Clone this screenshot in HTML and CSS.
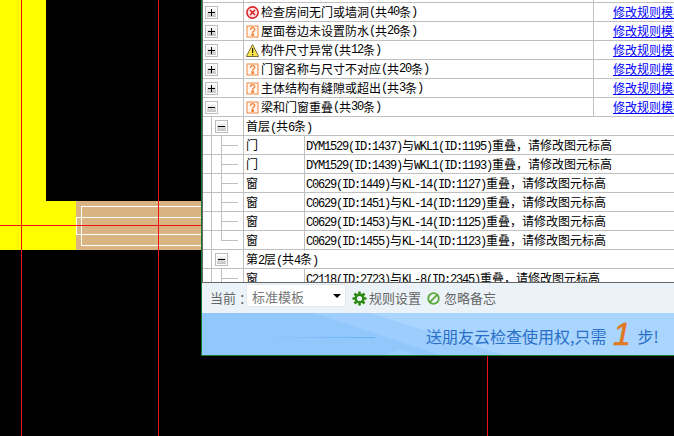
FILE: index.html
```html
<!DOCTYPE html>
<html lang="en">

<head>
  <meta charset="UTF-8">
  <meta name="viewport" content="width=device-width, initial-scale=1.0">
  <title>规则检查</title>
  <link rel="stylesheet" href="styles.css">
</head>

<body>

  <!-- Icon definitions -->
  <svg class="defs" width="0" height="0">
    <defs>
      <linearGradient id="box-fill" x1="0" y1="0" x2="0" y2="1">
        <stop offset="0" stop-color="#ffffff" />
        <stop offset="1" stop-color="#c4c4c4" />
      </linearGradient>
      <symbol id="i-plus" viewBox="0 0 13 13">
        <rect x="0.5" y="0.5" width="12" height="12" fill="#fff" stroke="#bdbdbd" />
        <rect x="2" y="2" width="9" height="9" fill="url(#box-fill)" />
        <path d="M3 6h7v1H3zM6 3h1v7H6z" fill="#000" />
      </symbol>
      <symbol id="i-minus" viewBox="0 0 13 13">
        <rect x="0.5" y="0.5" width="12" height="12" fill="#fff" stroke="#bdbdbd" />
        <rect x="2" y="2" width="9" height="9" fill="url(#box-fill)" />
        <path d="M3 6h7v1H3z" fill="#000" />
      </symbol>
      <symbol id="i-error" viewBox="0 0 13 13">
        <circle cx="6.500" cy="6.500" r="5.600" fill="#fde8e8" stroke="#d8262c" stroke-width="1.600" />
        <path d="M4 4l5 5M9 4l-5 5" stroke="#d8262c" stroke-width="1.700" />
      </symbol>
      <symbol id="i-question" viewBox="0 0 13 13">
        <rect x="1" y="1" width="11" height="11" fill="#fff7ef" stroke="#f0843c" />
        <path d="M4.500 5c0-3 4.300-3 4.300-.4C8.800 6.200 6.500 6 6.500 7.800M6 9h1.300v1.300H6z" fill="none" stroke="#f0843c" stroke-width="1.300" />
      </symbol>
      <symbol id="i-warn" viewBox="0 0 13 13">
        <path d="M6.500 .5L12.700 12.500H.3z" fill="#ffe34d" stroke="#77703a" />
        <path d="M6 4h1.200v5H6zM6 10h1.200v1.200H6z" fill="#222" />
      </symbol>
    </defs>
  </svg>

  <!-- Drawing canvas behind the panel -->
  <svg class="canvas" width="674" height="436" viewBox="0 0 674 436" shape-rendering="crispEdges">
    <rect x="0" y="0" width="46" height="250" fill="#ffff00" />
    <rect x="46" y="201" width="30" height="49" fill="#ffff00" />
    <rect x="76" y="201" width="126" height="49" fill="#d9b382" />
    <path d="M201 206.500H81.500V245.500H201M201 217.500H76.500V234.500H201" fill="none" stroke="#fff" />
    <path d="M21.500 0V436M158.500 0V436M487.500 0V436M0 225.500H201" fill="none" stroke="#ee1111" />
  </svg>

  <div class="panel">

    <!-- Rule list -->
    <div class="list">
      <div class="row row-parent row-cut">
        <div class="tree"></div>
        <div class="name"></div>
        <div class="link"></div>
      </div>

      <div class="row row-parent">
        <div class="tree"><svg class="box"><use href="#i-plus" /></svg></div>
        <div class="name"><svg class="icon"><use href="#i-error" /></svg>检查房间无门或墙洞<span class="m">(</span>共<span class="m">40</span>条<span class="m">)</span></div>
        <div class="link"><a href="#">修改规则模板</a></div>
      </div>
      <div class="row row-parent">
        <div class="tree"><svg class="box"><use href="#i-plus" /></svg></div>
        <div class="name"><svg class="icon"><use href="#i-question" /></svg>屋面卷边未设置防水<span class="m">(</span>共<span class="m">26</span>条<span class="m">)</span></div>
        <div class="link"><a href="#">修改规则模板</a></div>
      </div>
      <div class="row row-parent">
        <div class="tree"><svg class="box"><use href="#i-plus" /></svg></div>
        <div class="name"><svg class="icon"><use href="#i-warn" /></svg>构件尺寸异常<span class="m">(</span>共<span class="m">12</span>条<span class="m">)</span></div>
        <div class="link"><a href="#">修改规则模板</a></div>
      </div>
      <div class="row row-parent">
        <div class="tree"><svg class="box"><use href="#i-plus" /></svg></div>
        <div class="name"><svg class="icon"><use href="#i-question" /></svg>门窗名称与尺寸不对应<span class="m">(</span>共<span class="m">20</span>条<span class="m">)</span></div>
        <div class="link"><a href="#">修改规则模板</a></div>
      </div>
      <div class="row row-parent">
        <div class="tree"><svg class="box"><use href="#i-plus" /></svg></div>
        <div class="name"><svg class="icon"><use href="#i-question" /></svg>主体结构有缝隙或超出<span class="m">(</span>共<span class="m">3</span>条<span class="m">)</span></div>
        <div class="link"><a href="#">修改规则模板</a></div>
      </div>
      <div class="row row-parent">
        <div class="tree"><svg class="box"><use href="#i-minus" /></svg></div>
        <div class="name"><svg class="icon"><use href="#i-question" /></svg>梁和门窗重叠<span class="m">(</span>共<span class="m">30</span>条<span class="m">)</span></div>
        <div class="link"><a href="#">修改规则模板</a></div>
      </div>

      <!-- First floor -->
      <div class="row row-floor">
        <div class="tree tree-floor"><svg class="box"><use href="#i-minus" /></svg></div>
        <div class="floor">首层<span class="m">(</span>共<span class="m">6</span>条<span class="m">)</span></div>
      </div>
      <div class="row row-item">
        <div class="tree tree-item"></div>
        <div class="kind">门</div>
        <div class="desc"><span class="m">DYM1529(ID:1437)</span>与<span class="m">WKL1(ID:1195)</span>重叠，请修改图元标高</div>
      </div>
      <div class="row row-item">
        <div class="tree tree-item"></div>
        <div class="kind">门</div>
        <div class="desc"><span class="m">DYM1529(ID:1439)</span>与<span class="m">WKL1(ID:1193)</span>重叠，请修改图元标高</div>
      </div>
      <div class="row row-item">
        <div class="tree tree-item"></div>
        <div class="kind">窗</div>
        <div class="desc"><span class="m">C0629(ID:1449)</span>与<span class="m">KL-14(ID:1127)</span>重叠，请修改图元标高</div>
      </div>
      <div class="row row-item">
        <div class="tree tree-item"></div>
        <div class="kind">窗</div>
        <div class="desc"><span class="m">C0629(ID:1451)</span>与<span class="m">KL-14(ID:1129)</span>重叠，请修改图元标高</div>
      </div>
      <div class="row row-item">
        <div class="tree tree-item"></div>
        <div class="kind">窗</div>
        <div class="desc"><span class="m">C0629(ID:1453)</span>与<span class="m">KL-14(ID:1125)</span>重叠，请修改图元标高</div>
      </div>
      <div class="row row-item">
        <div class="tree tree-item tree-last"></div>
        <div class="kind">窗</div>
        <div class="desc"><span class="m">C0629(ID:1455)</span>与<span class="m">KL-14(ID:1123)</span>重叠，请修改图元标高</div>
      </div>

      <!-- Second floor -->
      <div class="row row-floor">
        <div class="tree tree-floor"><svg class="box"><use href="#i-minus" /></svg></div>
        <div class="floor">第<span class="m">2</span>层<span class="m">(</span>共<span class="m">4</span>条<span class="m">)</span></div>
      </div>
      <div class="row row-item">
        <div class="tree tree-item"></div>
        <div class="kind">窗</div>
        <div class="desc"><span class="m">C2118(ID:2723)</span>与<span class="m">KL-8(ID:2345)</span>重叠，请修改图元标高</div>
      </div>
    </div>

    <!-- Template toolbar -->
    <div class="toolbar">
      <span class="current">当前 ：</span>
      <div class="select">
        <span>标准模板</span>
        <i class="arrow"></i>
      </div>
      <svg class="tool-icon gear" width="15" height="15" viewBox="0 0 15 15">
        <path d="M7.500 .5v14M.5 7.500h14M2.500 2.500l10 10M12.500 2.500l-10 10" stroke="#2b8a12" stroke-width="2.600" />
        <circle cx="7.500" cy="7.500" r="3.800" fill="none" stroke="#2b8a12" stroke-width="2.400" />
        <circle cx="7.500" cy="7.500" r="2.600" fill="#ecf3f8" />
      </svg>
      <span class="tool">规则设置</span>
      <svg class="tool-icon ban" width="13" height="13" viewBox="0 0 13 13">
        <circle cx="6.500" cy="6.500" r="5.300" fill="none" stroke="#5aa83c" stroke-width="1.800" />
        <path d="M3.200 9.800l6.600-6.600" stroke="#5aa83c" stroke-width="1.800" />
      </svg>
      <span class="tool">忽略备忘</span>
    </div>

    <!-- Promo banner -->
    <div class="banner">
      <svg class="banner-bg" width="472" height="42" viewBox="0 0 472 42">
        <defs>
          <linearGradient id="rule-fade" x1="0" y1="0" x2="1" y2="0">
            <stop offset="0" stop-color="#6ab0f8" stop-opacity="0" />
            <stop offset="1" stop-color="#6ab0f8" />
          </linearGradient>
        </defs>
        <polygon points="111,0 198,0 301,42 238,42" fill="#9ccdfd" />
        <polygon points="168,0 472,0 472,42 301,42" fill="#a9d5ff" />
        <polygon points="183,42 198,37 218,42" fill="#9ccdfd" />
        <rect x="61" y="24" width="112" height="1" fill="url(#rule-fade)" />
      </svg>
      <span class="promo">送朋友云检查使用权,只需</span>
      <span class="promo-num">1</span>
      <span class="promo">步!</span>
    </div>
  </div>

</body>

</html>
```

FILE: styles.css
```css
/* Reset styles */
* {
  margin: 0;
  padding: 0;
  box-sizing: border-box;
}

html,
body {
  width: 674px;
  height: 436px;
  overflow: hidden;
}

body {
  position: relative;
  background: #000;
  font-family: "Noto Sans CJK SC", "Liberation Sans", sans-serif;
  font-size: 12px;
  color: #000;
}

.defs {
  position: absolute;
}

.canvas {
  position: absolute;
  top: 0;
  left: 0;
  display: block;
}

/* Floating panel */
.panel {
  position: absolute;
  top: 0;
  left: 201px;
  width: 473px;
  height: 356px;
  display: flex;
  flex-direction: column;
  border-left: 1px solid #1a7a2e;
  border-bottom: 1px solid #1a7a2e;
  background: #fff;
}

/* Rule list */
.list {
  height: 283px;
  flex: none;
  overflow: hidden;
  border-left: 1px solid #666;
  border-bottom: 1px solid #666;
}

.row {
  display: grid;
  height: 19px;
  line-height: 18px;
  border-bottom: 1px solid #c0c0c0;
  white-space: nowrap;
}

.row-parent {
  grid-template-columns: 41px 350px 1fr;
}

.row-cut {
  height: 3px;
}

.row-floor {
  grid-template-columns: 41px 1fr;
}

.row-item {
  grid-template-columns: 41px 61px 1fr;
}

.m {
  font-family: "Liberation Mono", monospace;
  font-size: 12px;
  letter-spacing: -1.2px;
}

/* Tree column */
.tree {
  display: flex;
  align-items: flex-start;
  border-right: 1px solid #c0c0c0;
}

.tree-floor,
.tree-item {
  background-image: linear-gradient(#c0c0c0, #c0c0c0);
  background-size: 1px 100%;
  background-position: 8px 0;
  background-repeat: no-repeat;
}

.tree-floor .box {
  margin-left: 12px;
}

.tree-item {
  background-image:
    linear-gradient(#c0c0c0, #c0c0c0),
    linear-gradient(#c0c0c0, #c0c0c0),
    linear-gradient(#c0c0c0, #c0c0c0);
  background-size: 1px 100%, 1px 100%, 16px 1px;
  background-position: 8px 0, 18px 0, 19px 9px;
  background-repeat: no-repeat;
}

.tree-last {
  background-size: 1px 100%, 1px 10px, 16px 1px;
}

.box {
  width: 13px;
  height: 13px;
  margin: 3px 0 0 2px;
  flex: none;
}

/* Cells */
.name {
  display: flex;
  align-items: flex-start;
  padding-left: 2px;
  border-right: 1px solid #c0c0c0;
}

.icon {
  width: 13px;
  height: 13px;
  margin: 3px 2px 0 0;
  flex: none;
}

.link {
  padding-left: 19px;
  overflow: hidden;
}

.link a {
  color: #0000ff;
  text-decoration: underline;
}

.floor {
  padding-left: 2px;
}

.kind {
  padding-left: 2px;
  border-right: 1px solid #c0c0c0;
}

.desc {
  padding-left: 1px;
}

/* Toolbar */
.toolbar {
  height: 30px;
  flex: none;
  display: flex;
  align-items: flex-start;
  padding: 1px 0 0 8px;
  background: #ecf3f8;
  color: #666;
  font-size: 13px;
  line-height: 18px;
}

.current {
  width: 36px;
  flex: none;
  margin-top: 5px;
  white-space: nowrap;
}

.select {
  width: 100px;
  height: 23px;
  flex: none;
  display: flex;
  align-items: center;
  justify-content: space-between;
  padding: 3px 4px 0 5px;
  background: #fff;
  border: 1px solid #e2e8ec;
  border-radius: 2px;
  color: #777;
}

.arrow {
  width: 0;
  height: 0;
  margin-top: -3px;
  border-left: 4px solid transparent;
  border-right: 4px solid transparent;
  border-top: 4px solid #000;
}

.tool-icon {
  flex: none;
}

.gear {
  margin: 7px 2px 0 6px;
}

.ban {
  margin: 8px 4px 0 6px;
}

.tool {
  margin-top: 5px;
}

/* Promo banner */
.banner {
  position: relative;
  flex: 1;
  display: flex;
  align-items: center;
  padding-left: 224px;
  background: #92c7fc;
  color: #2a70c8;
  overflow: hidden;
}

.banner-bg {
  position: absolute;
  top: 0;
  left: 0;
}

.promo {
  position: relative;
  font-size: 16px;
  line-height: 20px;
  margin-top: 4px;
}

.promo-num {
  position: relative;
  width: 31px;
  text-align: center;
  font-family: "Liberation Sans", sans-serif;
  font-size: 32px;
  font-style: italic;
  line-height: 30px;
  color: #e0781e;
  -webkit-text-stroke: 0.6px #e0781e;
}
```
